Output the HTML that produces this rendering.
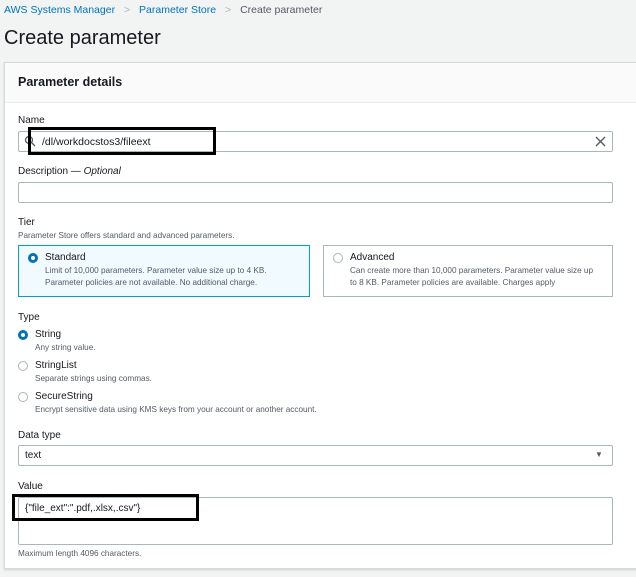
<!DOCTYPE html>
<html><head><style>
*{box-sizing:border-box;margin:0;padding:0}
body{width:636px;height:577px;background:#f2f3f3;font-family:"Liberation Sans",sans-serif;color:#16191f;position:relative;overflow:hidden}
.a{position:absolute;white-space:nowrap}
.lbl{font-size:10px;color:#16191f}
.sub{font-size:8.2px;color:#545b64}
.in{position:absolute;border:1px solid #aab7b8;background:#fff;border-radius:2px}
.radio{position:absolute;width:10px;height:10px;border-radius:50%;border:1px solid #aab7b8;background:#fff}
.radio.on{border:3px solid #0073bb}
.bk{position:absolute;border:3px solid #000}
</style></head><body>
<div class="a" style="left:4px;top:4px;font-size:10.5px;color:#0073bb">AWS Systems Manager <span style="color:#aab7b8;margin:0 6px">&gt;</span> Parameter Store <span style="color:#aab7b8;margin:0 6px">&gt;</span> <span style="color:#545b64">Create parameter</span></div>
<div class="a" style="left:4px;top:27px;font-size:20px;color:#16191f">Create parameter</div>
<div style="position:absolute;left:4px;top:62px;width:640px;height:507px;background:#fff;border:1px solid #d5dbdb;box-shadow:0 1px 2px rgba(0,0,0,.15)">
<div style="height:40px;background:#fafafa;border-bottom:1px solid #eaeded"></div></div>
<div class="a" style="left:18px;top:75px;font-size:12.5px;font-weight:bold">Parameter details</div>
<div class="a lbl" style="left:18px;top:115px">Name</div>
<div class="in" style="left:18px;top:131px;width:595px;height:21px"></div>
<svg class="a" style="left:24px;top:135px" width="12" height="12" viewBox="0 0 12 12"><circle cx="5" cy="5" r="3.5" fill="none" stroke="#545b64" stroke-width="1.3"/><path d="M7.5 7.5L11 11" stroke="#545b64" stroke-width="1.3"/></svg>
<div class="a" style="left:42px;top:136px;font-size:10.5px">/dl/workdocstos3/fileext</div>
<svg class="a" style="left:595px;top:136px" width="11" height="11"><path d="M1 1L10 10M10 1L1 10" stroke="#545b64" stroke-width="1.4"/></svg>
<div class="bk" style="left:28px;top:127px;width:188px;height:28px"></div>
<div class="a lbl" style="left:18px;top:166px">Description — <i>Optional</i></div>
<div class="in" style="left:18px;top:182px;width:595px;height:21px"></div>
<div class="a lbl" style="left:18px;top:217px">Tier</div>
<div class="a sub" style="left:18px;top:231px">Parameter Store offers standard and advanced parameters.</div>
<div style="position:absolute;left:18px;top:245px;width:292px;height:52px;background:#f1faff;border:1px solid #00a1c9"></div>
<div class="radio on" style="left:28px;top:253px"></div>
<div class="a" style="left:45px;top:252px;font-size:10px">Standard</div>
<div class="a sub" style="left:45px;top:265px;line-height:12px">Limit of 10,000 parameters. Parameter value size up to 4 KB.<br>Parameter policies are not available. No additional charge.</div>
<div style="position:absolute;left:323px;top:245px;width:290px;height:52px;background:#fff;border:1px solid #aab7b8"></div>
<div class="radio" style="left:333px;top:253px"></div>
<div class="a" style="left:350px;top:252px;font-size:10px">Advanced</div>
<div class="a sub" style="left:350px;top:265px;line-height:12px">Can create more than 10,000 parameters. Parameter value size up<br>to 8 KB. Parameter policies are available. Charges apply</div>
<div class="a lbl" style="left:18px;top:312px">Type</div>
<div class="radio on" style="left:18px;top:330px"></div>
<div class="a" style="left:35px;top:329px;font-size:10px">String</div>
<div class="a sub" style="left:35px;top:343px">Any string value.</div>
<div class="radio" style="left:18px;top:361px"></div>
<div class="a" style="left:35px;top:360px;font-size:10px">StringList</div>
<div class="a sub" style="left:35px;top:374px">Separate strings using commas.</div>
<div class="radio" style="left:18px;top:392px"></div>
<div class="a" style="left:35px;top:391px;font-size:10px">SecureString</div>
<div class="a sub" style="left:35px;top:405px">Encrypt sensitive data using KMS keys from your account or another account.</div>
<div class="a lbl" style="left:18px;top:430px">Data type</div>
<div class="in" style="left:18px;top:445px;width:595px;height:21px"></div>
<div class="a" style="left:25px;top:450px;font-size:10px">text</div>
<div class="a" style="left:595px;top:450px;font-size:8px;color:#545b64">▼</div>
<div class="a lbl" style="left:18px;top:481px">Value</div>
<div class="in" style="left:18px;top:497px;width:595px;height:48px"></div>
<div class="a" style="left:25px;top:503px;font-size:10px">{"file_ext":".pdf,.xlsx,.csv"}</div>
<div class="bk" style="left:12px;top:494px;width:187px;height:27px"></div>
<div class="a sub" style="left:18px;top:549px">Maximum length 4096 characters.</div>
</body></html>
